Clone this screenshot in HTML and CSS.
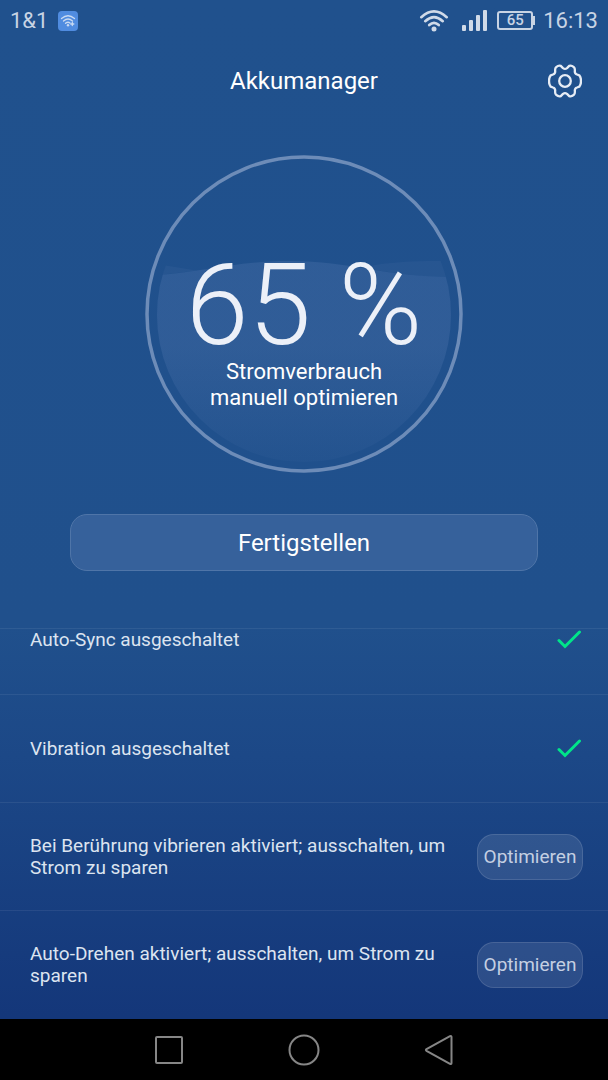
FILE: index.html
```
<!DOCTYPE html>
<html lang="de">
	<head>
		<meta charset="utf-8">
		<meta name="viewport" content="width=device-width,initial-scale=1.0">
		<title>Akkumanager</title>
		<link rel="stylesheet" href="styles.css">
	</head>
	<body>
		<div class="status">
			<span class="carrier">1&amp;1</span>
			<svg class="hotspot" width="20" height="20" viewBox="0 0 20 20">
				<rect width="20" height="20" rx="4" fill="#508ce0"/>
				<g fill="none" stroke="#c9daf2" stroke-width="1.3" stroke-linecap="round">
					<path d="M3.5 7.5Q10 2 16.500 7.500"/>
					<path d="M5.500 10Q10 6 14.500 10"/>
					<path d="M7.500 12.300Q10 10.300 12 12"/>
					<path d="M14.300 11.500v3M12.800 13h3"/>
				</g>
				<circle cx="10" cy="14.300" r="1.200" fill="#c9daf2"/>
			</svg>
			<div class="status-right">
				<svg class="wifi" width="30" height="24" viewBox="0 0 30 24">
					<g fill="none" stroke="#d0dae8" stroke-width="2.6" stroke-linecap="round">
						<path d="M2.300 8.200Q15 -3.400 27.700 8.200"/>
						<path d="M6.200 12.200Q15 4 23.800 12.200"/>
						<path d="M10.200 16Q15 11.600 19.800 16"/>
					</g>
					<circle cx="15" cy="20" r="2.500" fill="#d0dae8"/>
				</svg>
				<svg class="signal" width="25" height="22" viewBox="0 0 25 22" fill="#d0dae8">
					<rect x="0" y="15" width="4" height="6" rx="1"/>
					<rect x="7" y="10" width="4" height="11" rx="1"/>
					<rect x="14" y="5" width="4" height="16" rx="1"/>
					<rect x="21" y="0" width="4" height="21" rx="1"/>
				</svg>
				<span class="battery">65</span>
				<span class="clock">16:13</span>
			</div>
		</div>

		<header class="header">
			<h1>Akkumanager</h1>
			<button class="settings" aria-label="Einstellungen">
				<svg width="34" height="34" viewBox="0 0 34 34" fill="none" stroke="#e6ecf5" stroke-width="2.300" stroke-linejoin="round">
					<path d="M8.200 3.100Q10.500 1.100 12.800 1.900L15 4.100Q17 5.700 19 4.100L21.200 1.900Q23.500 1.100 25.800 3.100Q27.200 4.300 26.800 7.300Q26.700 9.800 29 10.500L31.300 11.300Q33.200 13.700 32.900 17Q33.200 20.300 31.300 22.700L29 23.500Q26.700 24.200 26.800 26.700Q27.200 29.700 25.800 30.900Q23.500 32.900 21.200 32.100L19 29.900Q17 28.300 15 29.900L12.800 32.100Q10.500 32.900 8.200 30.900Q6.800 29.700 7.200 26.700Q7.300 24.200 5 23.500L2.700 22.700Q.8 20.300 1.100 17Q.8 13.700 2.700 11.300L5 10.500Q7.300 9.800 7.200 7.300Q6.800 4.300 8.200 3.100Z"/>
					<circle cx="17" cy="17" r="5.800"/>
				</svg>
			</button>
		</header>

		<main>
			<div class="gauge">
				<svg class="gauge-bg" width="318" height="318" viewBox="0 0 318 318">
					<defs>
						<linearGradient id="water" x1="0" y1="0" x2="0" y2="1">
							<stop offset="0" stop-color="#9aaee0" stop-opacity=".13"/>
							<stop offset=".4" stop-color="#9aaee0" stop-opacity=".13"/>
							<stop offset="1" stop-color="#9aaee0" stop-opacity=".02"/>
						</linearGradient>
						<clipPath id="ball">
							<circle cx="159" cy="160" r="147"/>
						</clipPath>
					</defs>
					<circle cx="159" cy="159" r="157" fill="none" stroke="#6d8cb8" stroke-width="3.500"/>
					<g clip-path="url(#ball)">
						<!-- back wave, only where it shows above the front one -->
						<g fill="#9aaee0" fill-opacity=".06">
							<path d="M12 109L51.500 115.600C39.200 117.500 26.400 119.100 12 120Z"/>
							<path d="M216 112.800C245 106 275 106 306 106V122C269.700 122 242.800 117.200 216 112.800Z"/>
						</g>
						<path d="M12 120C60 117 90 106 145 106C205 106 240 122 306 122V318H12Z" fill="url(#water)"/>
					</g>
				</svg>
				<div class="gauge-text">
					<div class="percent">65 %</div>
					<div class="hint">Stromverbrauch<br>manuell optimieren</div>
				</div>
			</div>
			<button class="finish">Fertigstellen</button>
			<ul class="list">
				<li>
					<span>Auto-Sync ausgeschaltet</span>
					<svg class="check" width="26" height="20" viewBox="0 0 26 20"><path d="M2 10.500L8 16.500L22.500 2"/></svg>
				</li>
				<li>
					<span>Vibration ausgeschaltet</span>
					<svg class="check" width="26" height="20" viewBox="0 0 26 20"><path d="M2 10.500L8 16.500L22.500 2"/></svg>
				</li>
				<li>
					<span>Bei Berührung vibrieren aktiviert; ausschalten, um Strom zu sparen</span>
					<button class="optimize">Optimieren</button>
				</li>
				<li>
					<span>Auto-Drehen aktiviert; ausschalten, um Strom zu sparen</span>
					<button class="optimize">Optimieren</button>
				</li>
			</ul>
		</main>

		<nav class="nav">
			<button aria-label="Letzte Apps">
				<svg width="32" height="32" viewBox="0 0 32 32"><rect x="3" y="3" width="26" height="26" rx="1"/></svg>
			</button>
			<button aria-label="Startseite">
				<svg width="32" height="32" viewBox="0 0 32 32"><circle cx="16" cy="16" r="14.500"/></svg>
			</button>
			<button aria-label="Zurück">
				<svg width="32" height="32" viewBox="0 0 32 32"><path d="M3.500 15.200L27 2.200Q28.500 1.500 28.500 3V29Q28.500 30.500 27 29.800L3.500 16.800Q2.300 16 3.500 15.200Z"/></svg>
			</button>
		</nav>
	</body>
</html>
```

FILE: styles.css
```
* {
	margin: 0;
	padding: 0;
	box-sizing: border-box;
}

body {
	display: flex;
	flex-direction: column;
	height: 100vh;
	background: linear-gradient(#20518d 0, #20508c 58%, #1c4887 70%, #14377a 94%);
	color: #fff;
	font-family: Roboto, "Noto Sans", sans-serif;
}

button {
	border: none;
	background: none;
	color: inherit;
	font-family: inherit;
	cursor: pointer;
}

svg {
	display: block;
}

/* status bar */
.status {
	display: flex;
	align-items: center;
	flex: none;
	height: 41px;
	padding: 0 10px;
	color: #c8d4e4;
	font-size: 22px;
}

.hotspot {
	margin-left: 10px;
}

.status-right {
	display: flex;
	align-items: center;
	margin-left: auto;
}

.signal {
	margin-left: 13px;
}

.battery {
	position: relative;
	width: 36px;
	height: 19px;
	margin: 0 10px;
	border: 2px solid #c8d4e4;
	border-radius: 3px;
	font-size: 15px;
	font-weight: 500;
	line-height: 15px;
	text-align: center;
}

.battery::after {
	content: '';
	position: absolute;
	top: 3px;
	right: -4px;
	width: 2px;
	height: 9px;
	background: #c8d4e4;
}

/* title */
.header {
	display: grid;
	grid-template-columns: 1fr auto 1fr;
	align-items: center;
	flex: none;
	height: 79px;
	padding: 0 26px;
}

.header h1 {
	grid-column: 2;
	font-size: 24px;
	font-weight: 400;
}

.settings {
	justify-self: end;
}

main {
	display: flex;
	flex-direction: column;
	flex: 1;
	min-height: 0;
	padding-top: 35px;
}

/* gauge */
.gauge {
	display: grid;
	flex: none;
	justify-content: center;
}

.gauge-bg,
.gauge-text {
	grid-area: 1 / 1;
}

.gauge-text {
	padding-top: 98px;
	text-align: center;
}

.percent {
	color: #ecf0f8;
	font-size: 113px;
	font-weight: 300;
	line-height: 106px;
}

.hint {
	font-size: 22px;
	line-height: 26px;
}

.finish {
	flex: none;
	height: 57px;
	margin: 41px 70px 57px;
	border: 1px solid #4f75a8;
	border-radius: 17px;
	background: #36619b;
	font-size: 24px;
}

/* list is scrolled to its end, the first row is cut off */
.list {
	display: flex;
	flex-direction: column;
	justify-content: flex-end;
	flex: 1;
	min-height: 0;
	padding-bottom: 1px;
	overflow: hidden;
	border-top: 1px solid rgba(255, 255, 255, .07);
	list-style: none;
}

.list li {
	display: flex;
	align-items: center;
	justify-content: space-between;
	flex: none;
	gap: 24px;
	height: 108px;
	padding: 0 25px 0 30px;
	color: #dce4f0;
	font-size: 19px;
	line-height: 22px;
}

.list li + li {
	border-top: 1px solid rgba(255, 255, 255, .07);
}

.check {
	flex: none;
	fill: none;
	stroke: #00e589;
	stroke-width: 3;
	stroke-linecap: round;
}

.optimize {
	flex: none;
	width: 106px;
	height: 46px;
	border: 1px solid rgba(255, 255, 255, .12);
	border-radius: 17px;
	background: rgba(255, 255, 255, .1);
	color: #c4cfe2;
	font-size: 19px;
}

/* system buttons */
.nav {
	display: flex;
	align-items: center;
	justify-content: center;
	flex: none;
	gap: 103px;
	height: 61px;
	background: #000;
}

.nav svg {
	fill: none;
	stroke: #868686;
	stroke-width: 2;
}
```
